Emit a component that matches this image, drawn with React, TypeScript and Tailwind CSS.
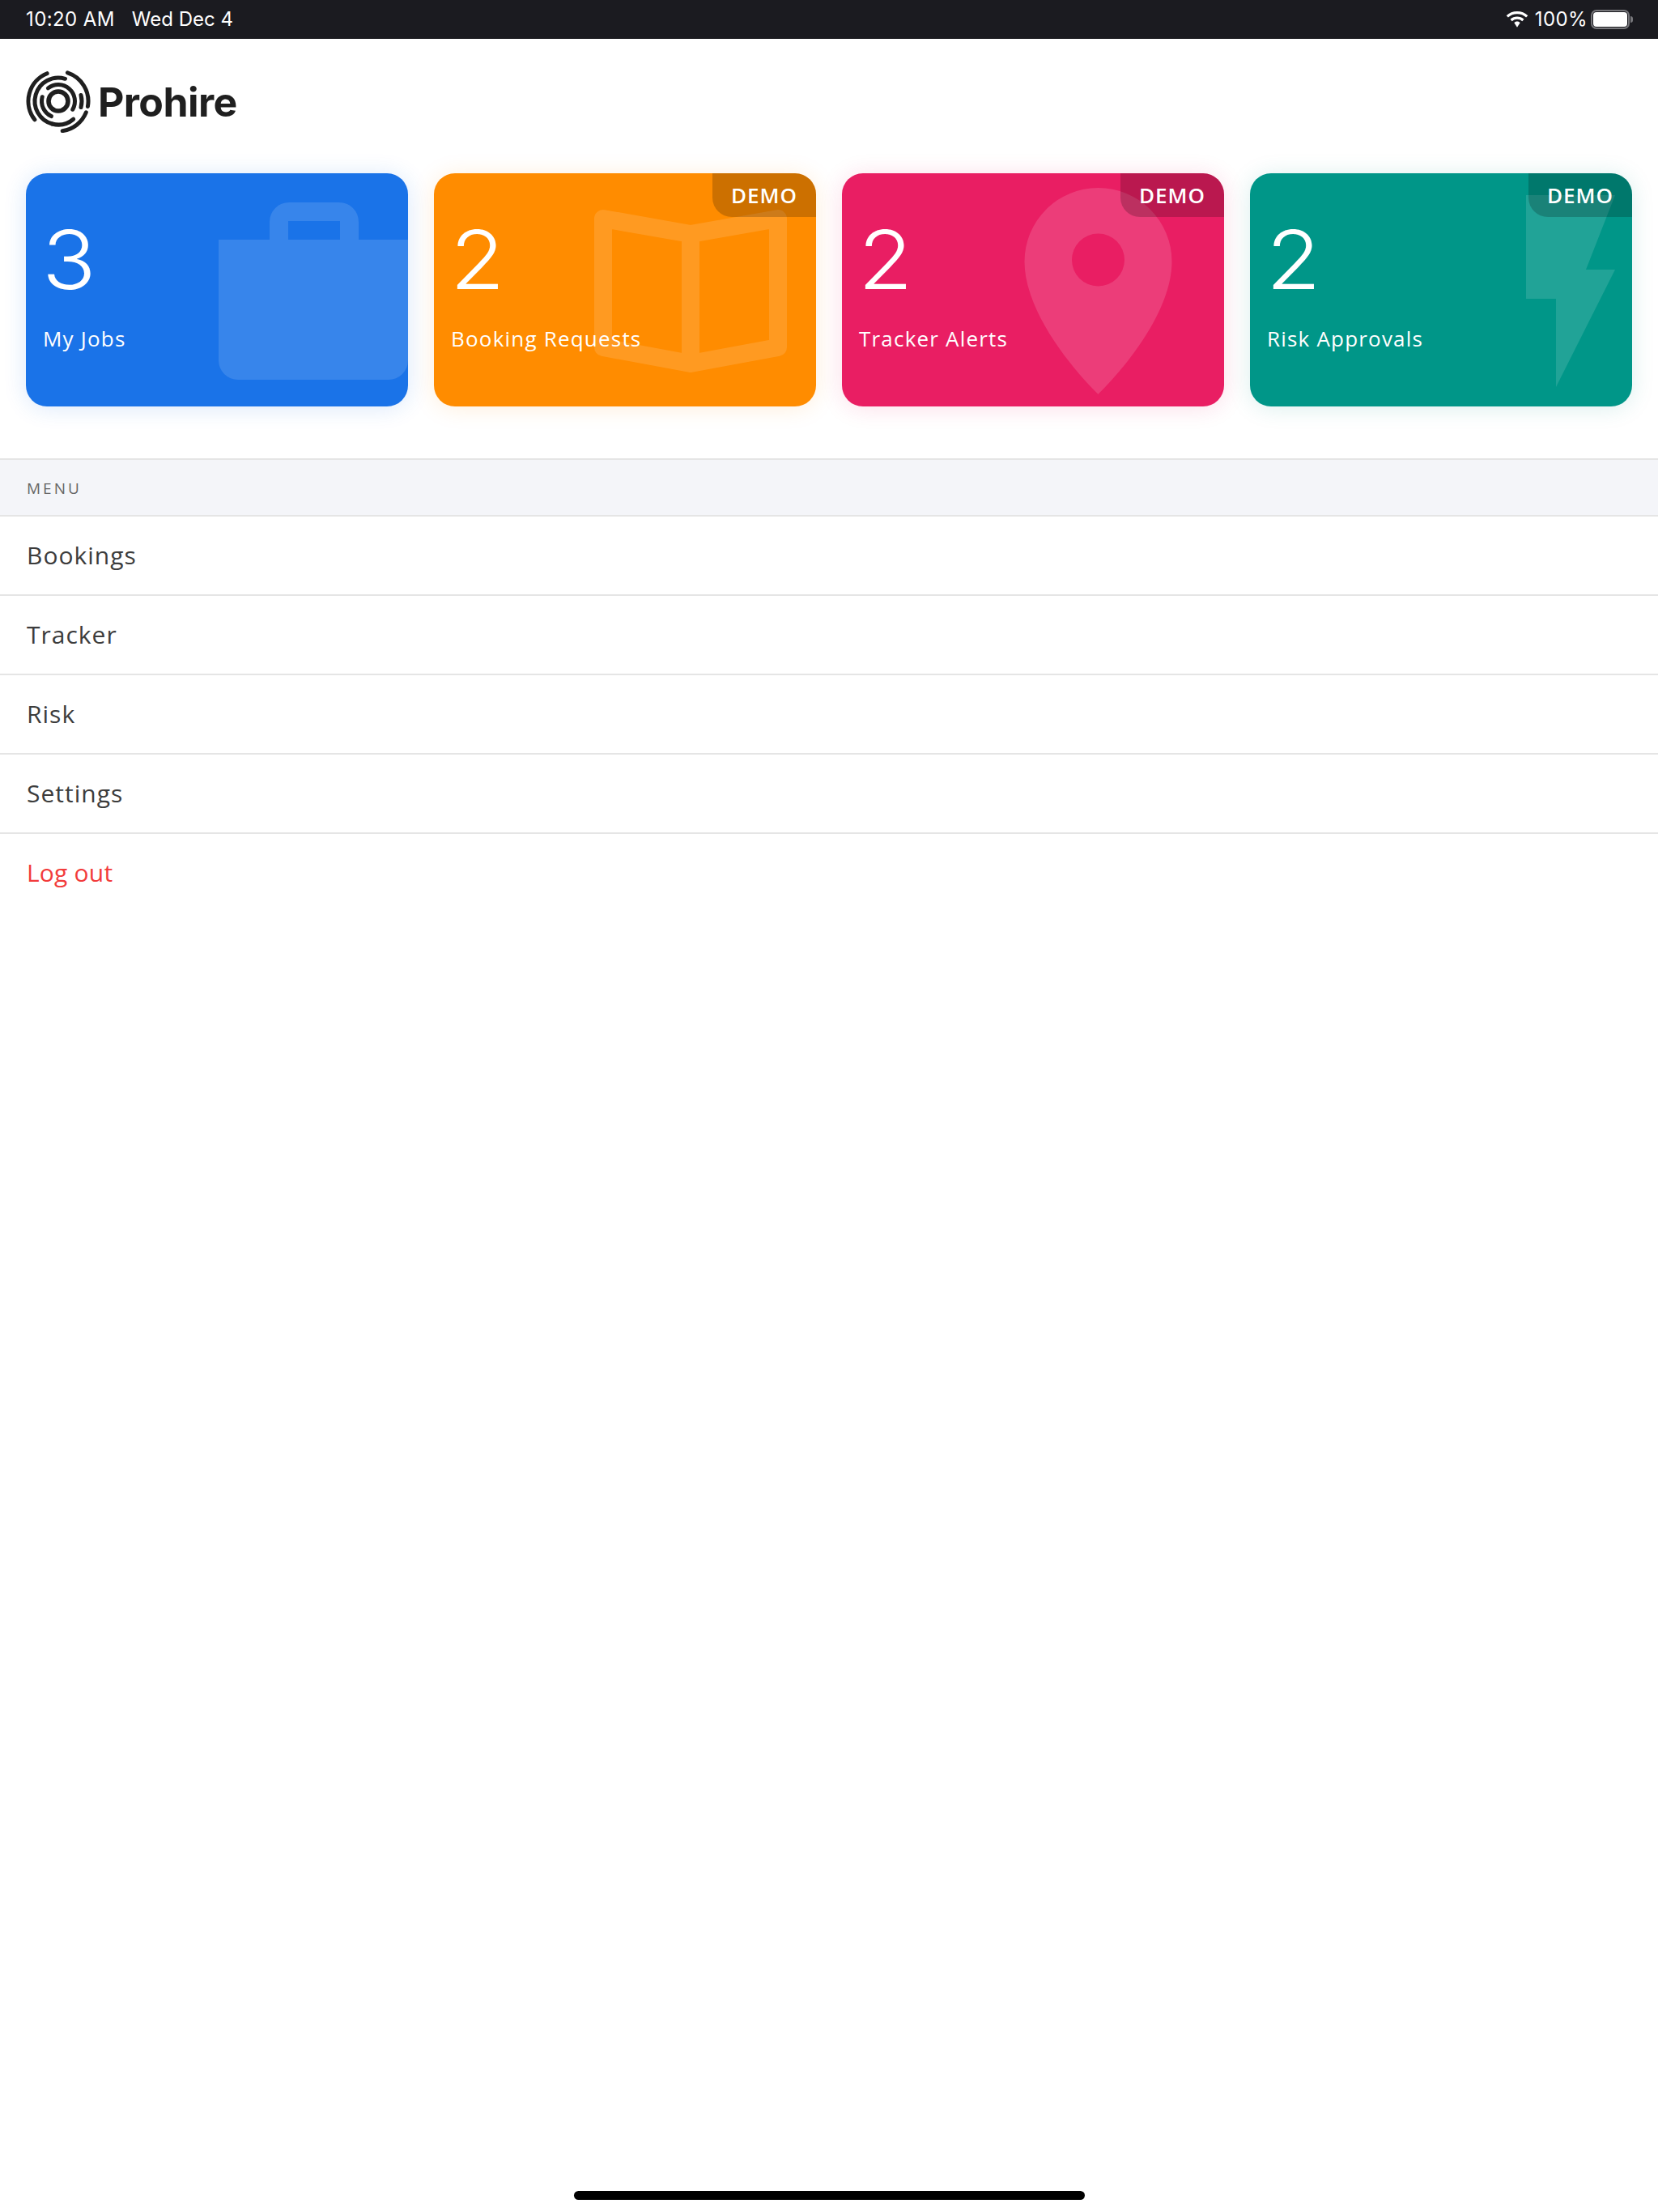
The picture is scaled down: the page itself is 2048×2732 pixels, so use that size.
import type { ReactNode } from "react";

const arc = (r: number, from: number, to: number) => {
  const cx = 71;
  const cy = 125;
  const rad = (a: number) => ((a - 90) * Math.PI) / 180;
  const x1 = cx + r * Math.cos(rad(from));
  const y1 = cy + r * Math.sin(rad(from));
  const x2 = cx + r * Math.cos(rad(to));
  const y2 = cy + r * Math.sin(rad(to));
  const large = to - from > 180 ? 1 : 0;
  return `M${x1} ${y1} A${r} ${r} 0 ${large} 1 ${x2} ${y2}`;
};

function Logo() {
  const arcs: [number, number, number][] = [
    [37, 18, 100],
    [37, 232, 338],
    [37, 112, 172],
    [29, 195, 377],
    [29, 75, 105],
    [29, 140, 195],
    [20.5, 322, 480],
    [20.5, 205, 285],
  ];
  return (
    <svg className="h-[78px] w-[80px] shrink-0" viewBox="31 86 80 78" fill="none">
      <g stroke="#1f1f1f" strokeWidth="5" strokeLinecap="round">
        {arcs.map(([r, a, b]) => (
          <path key={`${r}-${a}`} d={arc(r, a, b)} />
        ))}
        <circle cx="71" cy="125" r="12" strokeWidth="5.6" />
      </g>
    </svg>
  );
}

function Wifi() {
  return (
    <svg className="h-[20px] w-[28px]" viewBox="0 0 28 20" fill="none" stroke="white" strokeWidth="3.2">
      <path d="M1.8 6.4C5 3.300 9.300 1.600 14 1.600s9 1.700 12.200 4.800" />
      <path d="M6.600 11c2-1.800 4.600-2.900 7.400-2.900s5.400 1.100 7.400 2.900" />
      <path d="M14 12.500c-1.500 0-2.800.6-3.700 1.500L14 19.800l3.700-5.800c-.9-.9-2.200-1.500-3.700-1.500z" fill="white" stroke="none" />
    </svg>
  );
}

function Battery() {
  return (
    <div className="flex items-center">
      <div className="h-[24px] w-[48px] rounded-[7px] border-2 border-[#77777b] p-[1px]">
        <div className="h-full w-full rounded-[4px] bg-white" />
      </div>
      <div className="ml-[1px] h-[8px] w-[3px] rounded-r-full bg-[#77777b]" />
    </div>
  );
}

function Card({
  count,
  label,
  demo,
  className,
  children,
}: {
  count: string;
  label: string;
  demo?: boolean;
  className: string;
  children: ReactNode;
}) {
  return (
    <div className={`relative h-[288px] overflow-hidden rounded-[26px] px-[21px] text-white ${className}`}>
      <svg className="absolute inset-0 h-full w-full" viewBox="0 0 472 288">
        {children}
      </svg>
      {demo && (
        <div className="absolute top-0 right-0 flex h-[54px] w-[128px] items-center justify-center rounded-bl-[24px] bg-black/20 font-['Open_Sans',sans-serif] text-[26px] font-semibold tracking-[1px]">
          DEMO
        </div>
      )}
      <div className="relative -ml-[1px] origin-left scale-x-[1.1] pt-[47px] font-['Inter',sans-serif] text-[100px] leading-[120px] font-light">
        {count}
      </div>
      <div className="relative mt-[19px] font-['Open_Sans',sans-serif] text-[26px] leading-[36px] tracking-[1.2px]">{label}</div>
    </div>
  );
}

const menu = ["Bookings", "Tracker", "Risk", "Settings"];

export default function App() {
  return (
    <div className="relative flex min-h-[2732px] flex-col bg-white">
      <div className="flex h-12 items-center justify-between bg-[#1b1b20] pr-[31px] pl-8 font-['Inter',sans-serif] text-[24px] text-white">
        <div className="flex gap-[21px]">
          <span className="tracking-[0.4px]">10:20 AM</span>
          <span>Wed Dec 4</span>
        </div>
        <div className="flex items-center">
          <Wifi />
          <span className="mr-[4px] ml-[8px] tracking-[0.4px]">100%</span>
          <Battery />
        </div>
      </div>

      <div className="flex items-center gap-[9px] pt-[38px] pl-8">
        <Logo />
        <span className="translate-y-[1px] font-['Inter',sans-serif] text-[50px] leading-[78px] font-bold tracking-[-0.6px] text-[#1f1f1f]">
          Prohire
        </span>
      </div>

      <div className="mt-[50px] grid grid-cols-4 gap-8 px-8">
        <Card count="3" label="My Jobs" className="bg-[#1a73e8] shadow-[0_2px_28px_rgba(26,115,232,0.16)]">
          <path
            fill="white"
            opacity="0.13"
            d="M238 82H472V231a24 24 0 0 1-24 24H262a24 24 0 0 1-24-24ZM301 82V60a24 24 0 0 1 24-24h62a24 24 0 0 1 24 24v22h-23V59H324V82Z"
          />
        </Card>
        <Card demo count="2" label="Booking Requests" className="bg-[#ff8c00] shadow-[0_2px_28px_rgba(255,140,0,0.15)]">
          <path
            fill="none"
            stroke="white"
            strokeWidth="22"
            strokeLinejoin="round"
            opacity="0.13"
            d="M317 75L209 56V215L317 235L425 215V56ZM317 75V235"
          />
        </Card>
        <Card demo count="2" label="Tracker Alerts" className="bg-[#e91e63] shadow-[0_2px_28px_rgba(233,30,99,0.15)]">
          <path
            fill="white"
            fillRule="evenodd"
            opacity="0.14"
            d="M225.5 109A91 91 0 0 1 407.5 109C407.5 170 350 240 316.5 273C283 240 225.5 170 225.5 109ZM284 107a32.5 32.5 0 1 0 65 0a32.5 32.5 0 1 0-65 0Z"
          />
        </Card>
        <Card demo count="2" label="Risk Approvals" className="bg-[#009688] shadow-[0_2px_28px_rgba(0,150,136,0.15)]">
          <path fill="white" opacity="0.13" d="M341 27H451L415 119H451L378 264V155H341Z" />
        </Card>
      </div>

      <div className="mt-16 flex h-[72px] items-center border-y-2 border-[#e5e5e5] bg-[#f4f5f9] pt-[2px] pl-[33px] font-['Open_Sans',sans-serif] text-[19px] tracking-[3px] text-[#666666]">
        MENU
      </div>
      {menu.map((item) => (
        <div
          key={item}
          className="flex h-[98px] items-center border-b-2 border-[#e5e5e5] pb-[1px] pl-[33px] font-['Open_Sans',sans-serif] text-[30px] tracking-[1px] text-[#3c3c3c]"
        >
          {item}
        </div>
      ))}
      <div className="flex h-[98px] items-center pb-[3px] pl-[33px] font-['Open_Sans',sans-serif] text-[30px] tracking-[0.2px] text-[#f23b3b]">
        Log out
      </div>

      <div className="absolute top-[2706px] left-[709px] h-[11px] w-[631px] rounded-full bg-black" />
    </div>
  );
}
